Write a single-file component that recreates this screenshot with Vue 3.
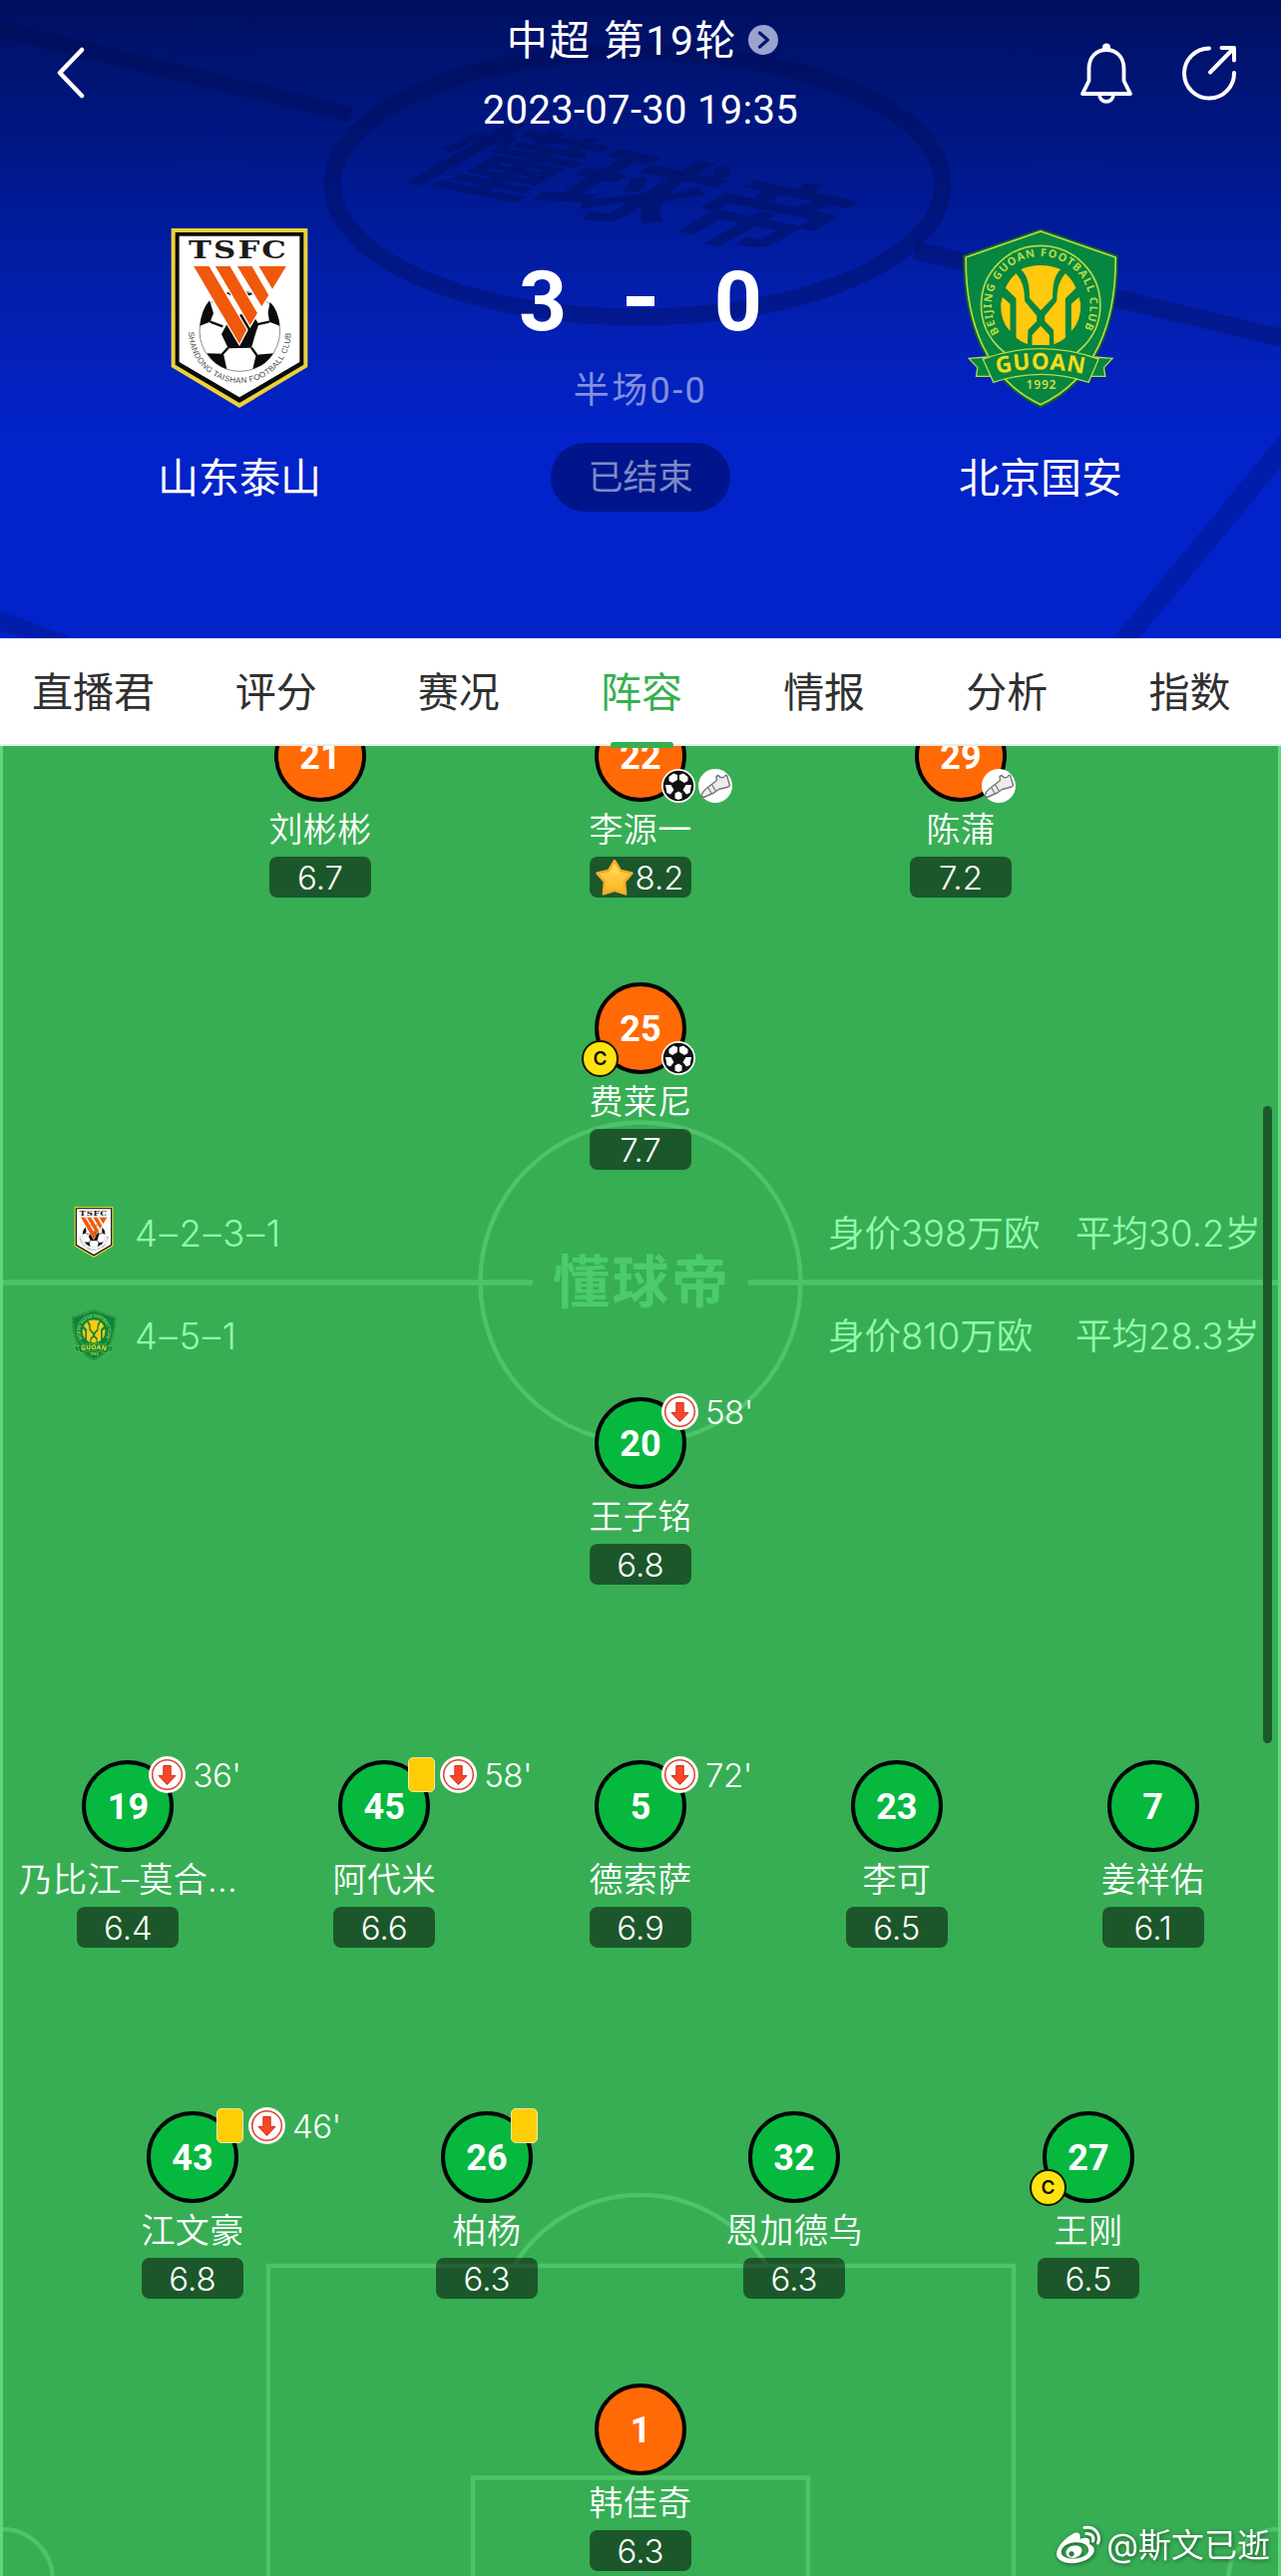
<script setup>
import { ref } from 'vue'

const tabs = ['直播君', '评分', '赛况', '阵容', '情报', '分析', '指数']
const activeTab = ref('阵容')

const match = {
  round: '中超 第19轮',
  time: '2023-07-30 19:35',
  home: { name: '山东泰山', score: 3, crest: 'crest-taishan' },
  away: { name: '北京国安', score: 0, crest: 'crest-guoan' },
  half: '半场0-0',
  status: '已结束',
}

const summary = [
  { crest: 'crest-taishan', formation: '4–2–3–1', value: '身价398万欧', age: '平均30.2岁' },
  { crest: 'crest-guoan', formation: '4–5–1', value: '身价810万欧', age: '平均28.3岁' },
]

const homeLines = [
  {
    key: 'wings',
    players: [
      { number: 21, name: '刘彬彬', rating: '6.7' },
      { number: 22, name: '李源一', rating: '8.2', best: true, goal: true, assist: true },
      { number: 29, name: '陈蒲', rating: '7.2', assist: true },
    ],
  },
  {
    key: 'striker',
    players: [{ number: 25, name: '费莱尼', rating: '7.7', captain: true, goal: true }],
  },
]

const awayLines = [
  {
    key: 'forward',
    players: [{ number: 20, name: '王子铭', rating: '6.8', off: "58'" }],
  },
  {
    key: 'midfield',
    players: [
      { number: 19, name: '乃比江–莫合...', rating: '6.4', off: "36'" },
      { number: 45, name: '阿代米', rating: '6.6', yellow: true, off: "58'" },
      { number: 5, name: '德索萨', rating: '6.9', off: "72'" },
      { number: 23, name: '李可', rating: '6.5' },
      { number: 7, name: '姜祥佑', rating: '6.1' },
    ],
  },
  {
    key: 'defence',
    players: [
      { number: 43, name: '江文豪', rating: '6.8', yellow: true, off: "46'" },
      { number: 26, name: '柏杨', rating: '6.3', yellow: true },
      { number: 32, name: '恩加德乌', rating: '6.3' },
      { number: 27, name: '王刚', rating: '6.5', captain: true },
    ],
  },
  {
    key: 'keeper',
    players: [{ number: 1, name: '韩佳奇', rating: '6.3', keeper: true }],
  },
]

const sides = [
  { key: 'home', lines: homeLines },
  { key: 'away', lines: awayLines },
]
</script>

<template>
  <div class="page">
    <!-- shared shapes -->
    <svg class="sprite" aria-hidden="true">
      <defs>
        <linearGradient id="star-fill" x1="0" y1="0" x2="0" y2="1">
          <stop offset="0" stop-color="#ffe45c" />
          <stop offset="1" stop-color="#ffb01f" />
        </linearGradient>
        <path id="taishan-arc" d="M117 368 A154 154 0 0 0 425 368" />
        <path id="guoan-arc" d="M158 370 A148 148 0 1 1 406 370" />
        <path id="guoan-ribbon-arc" d="M150 495 Q282 466 420 497" />
      </defs>

      <symbol id="crest-taishan" viewBox="65 57 410 540">
        <path d="M65 57H475V474L270 597L65 474Z" fill="#ecd23a" />
        <path d="M77 69H463V467L270 582L77 467Z" fill="#0b0b0b" />
        <path d="M89 80H451V459L270 565L89 459Z" fill="#fff" />
        <text
          x="117"
          y="148"
          textLength="300"
          lengthAdjust="spacingAndGlyphs"
          font-family="DejaVu Serif, serif"
          font-weight="700"
          font-size="72"
          letter-spacing="5"
          fill="#1d1a18"
        >TSFC</text>
        <circle cx="271" cy="366" r="121" fill="#fff" stroke="#8d8d8d" stroke-width="3" />
        <path
          d="M230 252Q270 240 312 254L292 262H250ZM151 350Q156 300 180 274L192 312L182 338ZM391 350Q388 305 362 278L356 310L360 338ZM216 375L236 338L300 300L328 345L318 375L306 416L236 418ZM172 433L222 434L232 480Q196 470 172 433ZM320 437L372 433Q352 468 310 480Z"
          fill="#0b0b0b"
        />
        <path
          d="M182 338L220 352M360 338L322 346M236 416L218 436M306 416L322 438"
          fill="none"
          stroke="#0b0b0b"
          stroke-width="7"
        />
        <g fill="#f0580b" stroke="#fff" stroke-width="4">
          <path d="M129 169H180L294 362L270 408Z" />
          <path d="M194 169H243L326 312L302 353Z" />
          <path d="M260 169H309L360 258L337 295Z" />
          <path d="M325 169H414L369 243Z" />
        </g>
        <text font-family="Liberation Sans, sans-serif" font-size="24" fill="#4a4a4a">
          <textPath href="#taishan-arc" textLength="480">SHANDONG TAISHAN FOOTBALL CLUB</textPath>
        </text>
      </symbol>

      <symbol id="crest-guoan" viewBox="48 57 467 540">
        <path
          d="M282 58L515 138C517 340 452 520 282 597C112 520 46 340 48 138Z"
          fill="#13602c"
        />
        <path
          d="M282 66L507 144C509 336 446 512 282 587C118 512 55 336 57 144Z"
          fill="#078640"
          stroke="#b5dc48"
          stroke-width="5"
        />
        <circle cx="282" cy="288" r="179" fill="#078640" stroke="#b5dc48" stroke-width="5" />
        <text
          font-family="Noto Sans, sans-serif"
          font-weight="700"
          font-size="33"
          fill="#b5dc48"
        >
          <textPath href="#guoan-arc" textLength="622">BEIJING GUOAN FOOTBALL CLUB</textPath>
        </text>
        <g fill="#ffc90d">
          <path d="M222 180Q282 156 342 180Q316 205 318 266L282 304L248 266Q250 205 222 180Z" />
          <path d="M208 193Q234 220 234 276L270 320V336L244 362L242 406Q222 398 208 386V268L176 236Q188 210 208 193Z" />
          <path d="M356 193Q330 220 330 276L294 320V336L320 362L322 406Q342 398 356 386V268L388 236Q376 210 356 193Z" />
          <path d="M167 264L190 284V366Q160 335 162 284Z" />
          <path d="M397 264L374 284V366Q404 335 402 284Z" />
          <path d="M282 350L308 378V408H256V378Z" />
        </g>
        <g fill="#078640" stroke="#b5dc48" stroke-width="4">
          <path d="M66 448L118 444L130 502L88 502L92 476Z" />
          <path d="M498 448L446 444L434 502L476 502L472 476Z" />
          <path d="M108 450Q282 388 456 450L426 520Q282 472 140 520Z" />
        </g>
        <text
          font-family="Noto Sans, sans-serif"
          font-weight="700"
          font-size="68"
          fill="#f2dc1c"
        >
          <textPath href="#guoan-ribbon-arc" textLength="264">GUOAN</textPath>
        </text>
        <text
          x="238"
          y="540"
          textLength="90"
          font-family="Noto Sans, sans-serif"
          font-weight="600"
          font-size="36"
          fill="#d5dc48"
        >1992</text>
      </symbol>

      <symbol id="icon-ball" viewBox="0 0 34 34">
        <circle cx="17" cy="17" r="17" fill="#fff" />
        <circle cx="17" cy="17" r="15.3" fill="#111" />
        <g fill="#fff">
          <path d="M7.5 8L12 4.5L16 6V11L11 14L7.5 12Z" />
          <path d="M26.5 8L22 4.5L18 6V11L23 14L26.5 12Z" />
          <path d="M4 16L9.5 16L12.5 21L9 25.5L5.5 24Z" />
          <path d="M30 16L24.5 16L21.5 21L25 25.5L28.5 24Z" />
          <path d="M13.5 24.5L17 22.5L20.5 24.5V29.5L17 31L13.5 29.5Z" />
        </g>
      </symbol>

      <symbol id="icon-boot" viewBox="0 0 34 34">
        <circle cx="17" cy="17" r="17" fill="#fff" />
        <path
          d="M3 27.5C3.5 24 6 21 9.5 18.5L18.5 11.5L18 7.5L20 6.5C22 9.5 25.5 9.5 27 6.5L28.5 6.500L31.5 16.5L30 18L20.5 20.5L15.5 24L5.500 28.500Z"
          fill="#ececec"
          stroke="#777"
          stroke-width="1.400"
          stroke-linejoin="round"
        />
        <path d="M9.500 18.500L13.500 25M13.500 15.500L17.500 22.500" stroke="#777" stroke-width="1.200" />
      </symbol>

      <symbol id="icon-off" viewBox="0 0 37 37">
        <circle cx="18.5" cy="18.5" r="18.5" fill="#fff" />
        <circle cx="18.5" cy="18.5" r="14.8" fill="#fff" stroke="#e0402c" stroke-width="1.5" />
        <path
          d="M14.8 9.5H22.2V19.5H27L18.5 28.5L10 19.5H14.8Z"
          fill="#fb4527"
          stroke="#c9321d"
          stroke-width="1"
          stroke-linejoin="round"
        />
      </symbol>
    </svg>

    <header class="header">
      <svg class="header__art" viewBox="0 0 1284 640" aria-hidden="true">
        <g fill="none" stroke="#000c4b" stroke-opacity="0.34">
          <ellipse cx="639" cy="185" rx="306" ry="133" stroke-width="17" />
          <path d="M-4 28L352 115" stroke-width="16" />
          <path d="M917 251L1290 340" stroke-width="18" />
        </g>
        <path d="M0 613V632L22 640H75Z" fill="#000c4b" fill-opacity="0.24" />
        <path d="M1284 435V468L1142 640H1116Z" fill="#000c4b" fill-opacity="0.24" />
        <text
          class="header__watermark"
          transform="matrix(1.22 0.25 -1.13 0.65 396 173)"
          textLength="322"
          lengthAdjust="spacingAndGlyphs"
        >懂球帝</text>
      </svg>

      <nav class="topbar">
        <button class="topbar__button" type="button" aria-label="返回">
          <svg width="28" height="52" viewBox="0 0 28 52">
            <path
              d="M25 3L3 26L25 49"
              fill="none"
              stroke="#fff"
              stroke-width="4.5"
              stroke-linecap="round"
              stroke-linejoin="round"
            />
          </svg>
        </button>
        <div class="topbar__title">
          <div class="topbar__round">
            <span>{{ match.round }}</span>
            <svg width="30" height="30" viewBox="0 0 30 30" aria-hidden="true">
              <circle cx="15" cy="15" r="15" fill="#9ba2cd" />
              <path
                d="M11.5 8L19.5 15L11.5 22"
                fill="none"
                stroke="#07166e"
                stroke-width="3.2"
                stroke-linecap="round"
                stroke-linejoin="round"
              />
            </svg>
          </div>
          <div class="topbar__time">{{ match.time }}</div>
        </div>
        <div class="topbar__actions">
          <svg width="54" height="62" viewBox="0 0 54 62" aria-label="提醒">
            <circle cx="27" cy="4.5" r="4" fill="#fff" />
            <g fill="none" stroke="#fff" stroke-width="3.8" stroke-linejoin="round">
              <path d="M9.5 38V26C9.5 14 17 7 27 7S44.5 14 44.5 26V38L51 51H3Z" />
              <path d="M20 51C20 61.5 34 61.5 34 51" />
            </g>
          </svg>
          <svg width="56" height="56" viewBox="0 0 56 56" aria-label="分享">
            <g fill="none" stroke="#fff" stroke-width="4" stroke-linecap="round" stroke-linejoin="round">
              <path d="M28 3.5A25 25 0 1 0 53 28" />
              <path d="M29 27.5L52.5 3.5M40.5 3H53V15.5" />
            </g>
          </svg>
        </div>
      </nav>

      <section class="match">
        <div class="team">
          <svg class="team__crest"><use :href="`#${match.home.crest}`" /></svg>
          <span class="team__name">{{ match.home.name }}</span>
        </div>
        <div class="result">
          <div class="result__score">
            <span>{{ match.home.score }}</span>
            <i class="result__dash"></i>
            <span>{{ match.away.score }}</span>
          </div>
          <div class="result__half">{{ match.half }}</div>
          <div class="result__status">{{ match.status }}</div>
        </div>
        <div class="team">
          <svg class="team__crest"><use :href="`#${match.away.crest}`" /></svg>
          <span class="team__name">{{ match.away.name }}</span>
        </div>
      </section>
    </header>

    <nav class="tabs">
      <button
        v-for="tab in tabs"
        :key="tab"
        class="tabs__item"
        :class="{ 'tabs__item--active': tab === activeTab }"
        type="button"
        @click="activeTab = tab"
      >
        {{ tab }}
      </button>
    </nav>

    <main class="pitch">
      <svg class="pitch__lines" viewBox="0 748 1284 1835" aria-hidden="true">
        <g fill="none" stroke="#4dc467" stroke-width="4.5">
          <circle cx="642" cy="1286" r="160.5" />
          <path d="M3 1286H534M750 1286H1281" stroke-width="5.5" />
          <path d="M269 2590V2272H1016V2590" />
          <path d="M474 2590V2484.5H810V2590" />
          <path d="M515 2272A149 149 0 0 1 769 2272" />
          <circle cx="2" cy="2587" r="51" />
          <circle cx="1282" cy="2587" r="51" />
        </g>
        <path d="M1.5 748V2583M1282.5 748V2583" stroke="#5fd87c" stroke-width="3" />
        <text class="pitch__brand" x="642" y="1306" text-anchor="middle" textLength="176">懂球帝</text>
      </svg>

      <template v-for="side in sides" :key="side.key">
        <section class="side" :class="`side--${side.key}`">
          <div v-for="line in side.lines" :key="line.key" class="line" :class="`line--${line.key}`">
            <article v-for="player in line.players" :key="player.number" class="player">
              <div class="player__shirt" :class="{ 'player__shirt--keeper': player.keeper }">
                {{ player.number }}
                <span v-if="player.captain" class="player__captain">C</span>
                <span v-if="player.yellow || player.off" class="player__events">
                  <i v-if="player.yellow" class="player__card"></i>
                  <svg v-if="player.off" class="player__off"><use href="#icon-off" /></svg>
                  <span v-if="player.off" class="player__minute">{{ player.off }}</span>
                </span>
                <span v-if="player.goal || player.assist" class="player__stats">
                  <svg v-if="player.goal"><use href="#icon-ball" /></svg>
                  <svg v-if="player.assist"><use href="#icon-boot" /></svg>
                </span>
              </div>
              <div class="player__name">{{ player.name }}</div>
              <div class="player__rating">
                <svg
                  v-if="player.best"
                  class="player__star"
                  width="40"
                  height="38"
                  viewBox="0 0 38 36"
                  aria-hidden="true"
                >
                  <path
                    d="M19 2L24.8 11.5L35.5 13.8L28.5 22L29.5 33.5L19 30L8.5 33.5L9.5 22L2.5 13.8L13.2 11.5Z"
                    fill="url(#star-fill)"
                    stroke="#f7ac2b"
                    stroke-width="2.5"
                    stroke-linejoin="round"
                  />
                </svg>
                <span>{{ player.rating }}</span>
              </div>
            </article>
          </div>
        </section>

        <section v-if="side.key === 'home'" class="summary">
          <div v-for="row in summary" :key="row.crest" class="summary__row">
            <svg class="summary__crest"><use :href="`#${row.crest}`" /></svg>
            <span class="summary__formation">{{ row.formation }}</span>
            <span class="summary__value">{{ row.value }}</span>
            <span>{{ row.age }}</span>
          </div>
        </section>
      </template>

      <i class="pitch__scrollbar"></i>

      <div class="author">
        <svg width="46" height="40" viewBox="0 0 46 40" aria-hidden="true">
          <path
            fill="#fff"
            fill-rule="evenodd"
            d="M17 9C22 6 26 8 24.5 14C31 11.5 36 13 34 19C39 21 40 25 37.5 29C31 39.5 8 41.5 2 32.5C-2 25.5 8 13.5 17 9ZM18 17.5C10 18.5 5 23 6 28.5C8 36 30 35 33 26.5C34 20 27 16.5 18 17.5ZM18.5 20.5C26 19.5 28.5 25 25 29.5C21 34.5 11 34 10.5 28C10.5 24 14 21 18.5 20.5ZM16 26.2A2.6 2.6 0 1 0 16.1 31.4A2.6 2.6 0 1 0 16 26.2Z"
          />
          <g fill="none" stroke="#fff" stroke-width="3" stroke-linecap="round">
            <path d="M29 2.5C39 0.5 46 9 42.5 18" />
            <path d="M31 8.5C36 8 39 12 37.5 16" />
          </g>
        </svg>
        <span>@斯文已逝</span>
      </div>
    </main>
  </div>
</template>

<style>
body {
  margin: 0;
}
</style>

<style scoped>
.page {
  width: 1284px;
  height: 2583px;
  overflow: hidden;
  display: flex;
  flex-direction: column;
  font-family: Inter, 'Noto Sans CJK SC', sans-serif;
}

button {
  padding: 0;
  border: 0;
  background: none;
  font: inherit;
}

svg {
  display: block;
}

.sprite {
  position: absolute;
  width: 0;
  height: 0;
}

.header {
  position: relative;
  flex: 0 0 640px;
  height: 640px;
  background: linear-gradient(#001060 0, #001a94 200px, #0420b4 330px, #0123c9 440px);
  color: #fff;
  font-family: Roboto, 'Noto Sans CJK SC', sans-serif;
}

.header__art {
  position: absolute;
  inset: 0;
  width: 1284px;
  height: 640px;
}

.header__watermark {
  fill: #000c4b;
  fill-opacity: 0.4;
  font-family: 'Noto Sans CJK SC', sans-serif;
  font-size: 100px;
  font-weight: 700;
}

.topbar {
  position: relative;
  display: grid;
  grid-template-columns: 240px 1fr 240px;
  height: 229px;
}

.topbar__button {
  justify-self: start;
  align-self: start;
  margin: 47px 0 0 57px;
}

.topbar__title {
  padding-top: 12px;
  text-align: center;
  font-size: 40px;
}

.topbar__round {
  display: flex;
  align-items: center;
  justify-content: center;
  gap: 11px;
  height: 59px;
  padding-left: 4px;
  font-size: 41px;
  line-height: 59px;
  letter-spacing: 1.6px;
}

.topbar__round svg {
  margin-bottom: 3px;
}

.topbar__time {
  height: 80px;
  line-height: 80px;
  letter-spacing: 0.3px;
}

.topbar__actions {
  display: flex;
  align-items: flex-start;
  justify-content: flex-end;
  gap: 48px;
  padding: 43px 44px 0 0;
}

.topbar__actions svg + svg {
  margin-top: 2px;
}

.match {
  position: relative;
  display: grid;
  grid-template-columns: 480px 1fr 480px;
}

.team {
  display: flex;
  flex-direction: column;
  align-items: center;
}

.team:last-child {
  padding-right: 2px;
}

.team__crest {
  width: 160px;
  height: 180px;
}

.team__name {
  margin-top: 41px;
  font-size: 41px;
  line-height: 60px;
}

.result {
  display: flex;
  flex-direction: column;
  align-items: center;
}

.result__score {
  display: flex;
  align-items: center;
  justify-content: space-between;
  width: 244px;
  height: 146px;
  font-size: 84px;
  font-weight: 700;
}

.result__dash {
  width: 28px;
  height: 10px;
  background: #fff;
}

.result__half {
  height: 69px;
  color: rgb(255 255 255 / 0.5);
  font-size: 36px;
  line-height: 34px;
  letter-spacing: 2.4px;
}

.result__status {
  width: 180px;
  height: 69px;
  border-radius: 35px;
  background: #00158b;
  color: rgb(255 255 255 / 0.5);
  font-size: 35px;
  line-height: 71px;
  text-align: center;
}

.tabs {
  position: relative;
  z-index: 1;
  box-sizing: border-box;
  flex: 0 0 108px;
  display: grid;
  grid-template-columns: repeat(7, 1fr);
  height: 108px;
  padding-left: 2px;
  border-bottom: 2px solid #e9eeea;
  background: #fff;
}

.tabs__item {
  position: relative;
  color: #303030;
  font-size: 41px;
  line-height: 109px;
}

.tabs__item--active {
  color: #35b04f;
}

.tabs__item--active::after {
  position: absolute;
  bottom: -1px;
  left: 50%;
  width: 63px;
  height: 6px;
  margin-left: -31px;
  border-radius: 3px;
  background: #35b04f;
  content: '';
}

.pitch {
  position: relative;
  flex: 1;
  overflow: hidden;
  background: #37ae54;
  color: #fff;
}

.pitch__lines {
  position: absolute;
  inset: 0;
  width: 1284px;
  height: 1835px;
}

.pitch__brand {
  fill: #4bcb6a;
  font-family: 'Noto Sans CJK SC', sans-serif;
  font-size: 57px;
  font-weight: 700;
}

.pitch__scrollbar {
  position: absolute;
  top: 361px;
  right: 9px;
  width: 9px;
  height: 639px;
  border-radius: 5px;
  background: #1b582c;
}

.side {
  --shirt: #07b83f;

  position: relative;
  display: flex;
  flex-direction: column;
}

.side--home {
  --shirt: #ff6a06;

  margin-top: -36px;
}

.line {
  --slot: 321px;

  display: flex;
  justify-content: center;
}

.line--striker {
  margin-top: 85px;
}

.line--midfield {
  --slot: 256.8px;

  margin-top: 176px;
}

.line--defence {
  --slot: 295px;

  margin-top: 164px;
}

/* centre backs stand a little further apart */
.line--defence .player:nth-child(3) {
  margin-left: 13px;
}

.line--keeper {
  margin-top: 85px;
}

.player {
  display: flex;
  flex: 0 0 var(--slot);
  flex-direction: column;
  align-items: center;
  height: 188px;
}

.player__shirt {
  position: relative;
  box-sizing: border-box;
  width: 92px;
  height: 92px;
  border: 4px solid #050505;
  border-radius: 50%;
  background: var(--shirt);
  font-family: Roboto, sans-serif;
  font-size: 36px;
  font-weight: 700;
  line-height: 86px;
  text-align: center;
}

.player__shirt--keeper {
  --shirt: #ff6a06;
}

.player__captain {
  position: absolute;
  top: 54px;
  left: -17px;
  box-sizing: border-box;
  width: 37px;
  height: 37px;
  border: 2px solid #161600;
  border-radius: 50%;
  background: #ffe311;
  color: #111;
  font-family: Inter, sans-serif;
  font-size: 19px;
  font-weight: 600;
  line-height: 33px;
}

.player__events {
  position: absolute;
  top: -8px;
  left: 63px;
  display: flex;
  align-items: center;
  gap: 5px;
  height: 37px;
}

.player__card {
  box-sizing: border-box;
  width: 27px;
  height: 35px;
  margin-left: 3px;
  border: 1.5px solid #fbe9a6;
  border-radius: 5px;
  background: #ffcd05;
}

.player__off {
  width: 37px;
  height: 37px;
}

.player__minute {
  margin-left: 2px;
  font-family: Inter, sans-serif;
  font-size: 33px;
  font-weight: 350;
  line-height: 34px;
  letter-spacing: -0.5px;
}

.player__stats {
  position: absolute;
  top: 55px;
  left: 63px;
  display: flex;
  gap: 3px;
}

.player__stats svg {
  width: 34px;
  height: 34px;
}

.player__name {
  height: 53px;
  padding-top: 2px;
  font-size: 34px;
  font-weight: 350;
  line-height: 52px;
  letter-spacing: 0.4px;
  white-space: nowrap;
}

.player__rating {
  display: flex;
  align-items: center;
  justify-content: center;
  width: 102px;
  height: 41px;
  border-radius: 8px;
  background: rgb(0 0 0 / 0.5);
  font-size: 33px;
  font-weight: 350;
  line-height: 42px;
}

.player__star {
  flex: none;
  margin-left: -2px;
}

.summary {
  position: relative;
  display: flex;
  flex-direction: column;
  gap: 51px;
  box-sizing: border-box;
  height: 228px;
  padding-top: 37px;
  color: #93fbad;
  font-size: 36.5px;
  font-weight: 350;
}

.summary__row {
  display: grid;
  grid-template-columns: 68px 695px 248px 1fr;
  align-items: center;
  height: 52px;
  padding-left: 67px;
  line-height: 52px;
  white-space: nowrap;
}

.summary__crest {
  width: 54px;
  height: 51px;
  margin-bottom: 2px;
}

.summary__formation {
  letter-spacing: 1.6px;
}

.author {
  position: absolute;
  right: 11px;
  bottom: 8px;
  display: flex;
  align-items: center;
  gap: 5px;
  font-size: 33px;
  line-height: 46px;
  filter: drop-shadow(1px 1px 2px rgb(0 0 0 / 0.5));
}
</style>
